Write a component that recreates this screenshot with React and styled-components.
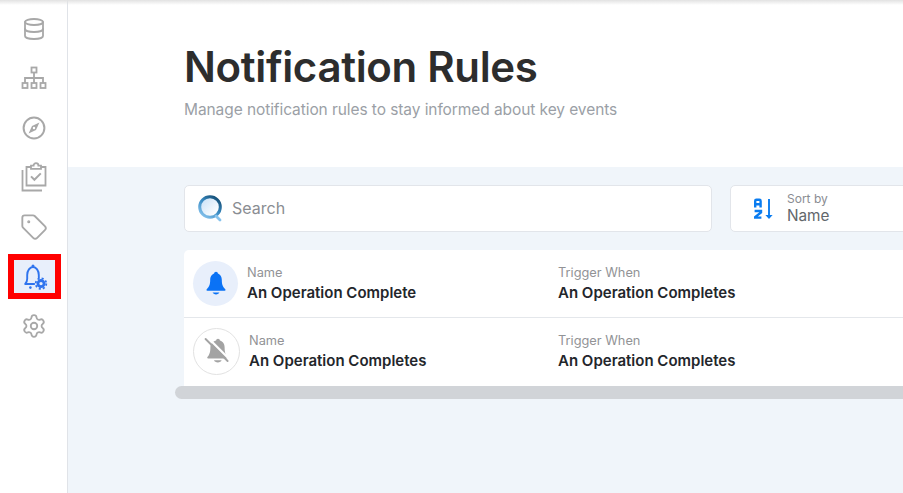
import React from "react";
import styled, { createGlobalStyle } from "styled-components";
import { Database, Tag, Settings } from "lucide-react";

const GlobalStyle = createGlobalStyle`
  html, body { margin: 0; padding: 0; height: 100%; overflow: hidden; background: #fff; }
  body { font-family: Inter, "Noto Sans", sans-serif; }
  #root { height: 100%; }
`;

const NetworkIcon = () => (
  <svg width="26" height="24" viewBox="0 0 26 24" fill="none" stroke="currentColor" strokeWidth="1.8">
    <rect x="10.5" y="1.5" width="5" height="5" />
    <rect x="1.5" y="17" width="5" height="5" />
    <rect x="10.5" y="17" width="5" height="5" />
    <rect x="19.5" y="17" width="5" height="5" />
    <path d="M13 6.5V17M4 17v-5h18v5" />
  </svg>
);

const CompassIcon = () => (
  <svg width="24" height="24" viewBox="0 0 24 24" fill="none">
    <circle cx="12" cy="12" r="10.4" stroke="currentColor" strokeWidth="2" />
    <path d="M17.4 6.6l-3.4 7.4-7.4 3.4 3.4-7.4z" fill="currentColor" />
    <circle cx="12" cy="12" r="1.2" fill="#fff" />
  </svg>
);

const ClipboardStackIcon = () => (
  <svg width="26" height="30" viewBox="0 0 26 30" fill="none" stroke="currentColor" strokeWidth="1.8">
    <path d="M1.5 8v20.5H21" />
    <path d="M10 5H5.5v18.5h19V5H20" />
    <path d="M10 6.8V3.6h2.6a2.4 2.4 0 0 1 4.8 0H20v3.2z" />
    <path d="M10 14.4l3.4 3.4 6.4-6.4" strokeWidth="2" />
  </svg>
);

const BellGearIcon = () => (
  <svg width="26" height="27" viewBox="0 0 26 27" fill="none">
    <path
      d="M12.2 21H3.2c1.2-1.2 2-2.6 2-5.2V12C5.2 7.6 7.8 4 11 4s5.8 3.6 5.8 8v2.6"
      stroke="#2f74ee"
      strokeWidth="1.9"
      strokeLinecap="round"
      strokeLinejoin="round"
    />
    <circle cx="11" cy="3" r="1.5" fill="#2f74ee" />
    <circle cx="8.4" cy="24.6" r="1.3" fill="#2f74ee" />
    <circle cx="19" cy="20.6" r="3.1" stroke="#2f74ee" strokeWidth="2.8" />
    <circle cx="19" cy="20.6" r="5.3" stroke="#2f74ee" strokeWidth="1.8" strokeDasharray="2.08 2.08" />
  </svg>
);

const SearchMark = () => (
  <svg width="26" height="27" viewBox="0 0 26 27" fill="none">
    <defs>
      <linearGradient id="ring" x1="20" y1="2" x2="5" y2="22" gradientUnits="userSpaceOnUse">
        <stop offset="0" stopColor="#124a70" />
        <stop offset="0.5" stopColor="#3a8cc4" />
        <stop offset="1" stopColor="#86c2ec" />
      </linearGradient>
      <linearGradient id="fill" x1="5" y1="5" x2="19" y2="19" gradientUnits="userSpaceOnUse">
        <stop offset="0" stopColor="#cfe4f8" />
        <stop offset="1" stopColor="#ffffff" />
      </linearGradient>
    </defs>
    <circle cx="12" cy="12" r="10.3" fill="url(#fill)" stroke="url(#ring)" strokeWidth="3" />
    <path d="M18 21l4 4" stroke="#86c2ec" strokeWidth="2.8" strokeLinecap="round" />
  </svg>
);

const SortIcon = () => (
  <svg width="22" height="22" viewBox="0 0 22 22" fill="none">
    <path d="M2.2 9.5V3c0-.8.5-1.2 1.2-1.2h3c.7 0 1.2.4 1.2 1.2v6.5M2.2 6.2h5.4" stroke="#0a7cf0" strokeWidth="2.4" />
    <path d="M1.6 13h6.4v1.4l-5.8 4.6v.6h6.2" stroke="#0a7cf0" strokeWidth="2.4" />
    <path d="M16 1v18" stroke="#0a7cf0" strokeWidth="1.9" />
    <path d="M12.4 17h7.2L16 21z" fill="#0a7cf0" />
  </svg>
);

const BellSolid = () => (
  <svg width="22" height="25" viewBox="0 0 22 25" fill="#0a72f5">
    <circle cx="11" cy="2.6" r="1.9" />
    <path d="M11 2.2c-3.8 0-5.8 3-5.8 6.6 0 4.8-1 7-3.2 9.2-.3.4-.6.6-.6 1 0 .5.4.7 1 .7h17.2c.6 0 1-.2 1-.7 0-.4-.3-.6-.6-1-2.2-2.2-3.2-4.4-3.2-9.2 0-3.6-2-6.6-5.8-6.6z" />
    <path d="M7.6 21.6h6.8c-.5 1.2-1.8 1.8-3.4 1.8s-2.9-.6-3.4-1.8z" />
  </svg>
);

const BellMuted = () => (
  <svg width="26" height="28" viewBox="0 0 26 28">
    <circle cx="14" cy="3.6" r="1.9" fill="#a3a3a3" />
    <path
      d="M14 3.2c4 0 6.6 3 6.6 7 0 5 .8 7.4 2.4 9.4.4.5.6.8.6 1.2 0 .5-.4.7-1 .7H4.2c-.6 0-1-.2-1-.7 0-.4.2-.7.6-1.2 1.6-2 2.6-4.4 2.6-9.4 0-4 3.6-7 7.6-7z"
      fill="#a3a3a3"
    />
    <path d="M10 23.2h7.6c-.4 1.4-2 2.2-3.8 2.2s-3.4-.8-3.8-2.2z" fill="#a3a3a3" />
    <path d="M3.4 0.2l22 22" stroke="#fff" strokeWidth="2.2" />
    <path d="M1.6 2l22 22" stroke="#a3a3a3" strokeWidth="1.9" strokeLinecap="round" />
  </svg>
);

const App = () => (
  <Page>
    <GlobalStyle />
    <Sidebar>
      <NavItem><Database size={24} strokeWidth={1.8} /></NavItem>
      <NavItem><NetworkIcon /></NavItem>
      <NavItem><CompassIcon /></NavItem>
      <NavItem><ClipboardStackIcon /></NavItem>
      <NavItem><Tag size={28} strokeWidth={1.6} /></NavItem>
      <ActiveItem><BellGearIcon /></ActiveItem>
      <NavItem><Settings size={26} strokeWidth={1.7} /></NavItem>
    </Sidebar>
    <Main>
      <Header>
        <Title>Notification Rules</Title>
        <Subtitle>Manage notification rules to stay informed about key events</Subtitle>
      </Header>
      <Content>
        <Toolbar>
          <SearchBox>
            <SearchMark />
            <SearchText>Search</SearchText>
          </SearchBox>
          <SortBox>
            <SortIcon />
            <SortLabels>
              <SortCaption>Sort by</SortCaption>
              <SortValue>Name</SortValue>
            </SortLabels>
          </SortBox>
        </Toolbar>
        <Table>
          <Row>
            <Avatar $active><BellSolid /></Avatar>
            <NameCell>
              <Label>Name</Label>
              <Value>An Operation Complete</Value>
            </NameCell>
            <Cell>
              <Label>Trigger When</Label>
              <Value>An Operation Completes</Value>
            </Cell>
          </Row>
          <Row>
            <Avatar><BellMuted /></Avatar>
            <NameCell $shift>
              <Label>Name</Label>
              <Value>An Operation Completes</Value>
            </NameCell>
            <Cell>
              <Label>Trigger When</Label>
              <Value>An Operation Completes</Value>
            </Cell>
          </Row>
        </Table>
        <ScrollThumb />
      </Content>
    </Main>
    <TopShade />
  </Page>
);

const Page = styled.div`
  display: flex;
  height: 493px;
  width: 903px;
  overflow: hidden;
  position: relative;
`;

const TopShade = styled.div`
  position: absolute;
  top: 0;
  left: 0;
  right: 0;
  height: 5px;
  background: linear-gradient(#e2e2e2, rgba(255, 255, 255, 0));
`;

const Sidebar = styled.nav`
  width: 67px;
  flex-shrink: 0;
  border-right: 1px solid #e0e3e8;
  display: flex;
  flex-direction: column;
  align-items: center;
  padding-top: 4px;
  background: #fff;
`;

const NavItem = styled.div`
  height: 49.5px;
  width: 100%;
  display: flex;
  align-items: center;
  justify-content: center;
  color: #a8a8a8;
`;

const ActiveItem = styled.div`
  box-sizing: border-box;
  width: 53px;
  height: 45px;
  margin: 2px 0 2.5px 2px;
  border: 6px solid #ff0000;
  background: #e8effb;
  display: flex;
  align-items: center;
  justify-content: center;
`;

const Main = styled.main`
  flex: 1;
  min-width: 0;
  display: flex;
  flex-direction: column;
`;

const Header = styled.header`
  height: 167px;
  box-sizing: border-box;
  padding: 41px 0 0 116px;
  background: #fff;
`;

const Title = styled.h1`
  margin: 0;
  font-size: 42px;
  line-height: 52px;
  font-weight: 600;
  color: #2d2d2d;
  letter-spacing: -0.33px;
`;

const Subtitle = styled.p`
  margin: 7px 0 0;
  font-size: 15.5px;
  line-height: 20px;
  letter-spacing: -0.08px;
  color: #9b9fa6;
`;

const Content = styled.section`
  flex: 1;
  background: #f0f5fa;
  padding: 18px 0 0 116px;
`;

const Toolbar = styled.div`
  display: flex;
  gap: 18px;
  width: 900px;
`;

const SearchBox = styled.div`
  box-sizing: border-box;
  width: 528px;
  height: 47px;
  background: #fff;
  border: 1px solid #e2e5ea;
  border-radius: 5px;
  display: flex;
  align-items: center;
  gap: 8px;
  padding-left: 13px;
`;

const SearchText = styled.span`
  font-size: 16px;
  line-height: 18px;
  margin-bottom: 1px;
  color: #8a8d92;
`;

const SortBox = styled.div`
  box-sizing: border-box;
  width: 300px;
  height: 47px;
  background: #fff;
  border: 1px solid #e2e5ea;
  border-radius: 5px;
  display: flex;
  align-items: center;
  gap: 12px;
  padding-left: 22px;
`;

const SortLabels = styled.div`
  display: flex;
  flex-direction: column;
`;

const SortCaption = styled.span`
  font-size: 12px;
  line-height: 14px;
  color: #8a8d92;
`;

const SortValue = styled.span`
  font-size: 15.3px;
  line-height: 19px;
  color: #62666b;
`;

const Table = styled.div`
  margin-top: 18px;
  width: 900px;
  background: #fff;
  border-radius: 5px 0 0 0;
`;

const Row = styled.div`
  height: 67px;
  box-sizing: border-box;
  display: flex;
  align-items: center;
  padding-left: 9px;
  & + & {
    height: 69px;
    border-top: 1px solid #e4e7eb;
  }
`;

const Avatar = styled.div`
  box-sizing: border-box;
  width: ${(p) => (p.$active ? "45px" : "47px")};
  height: ${(p) => (p.$active ? "45px" : "47px")};
  margin-bottom: ${(p) => (p.$active ? "0" : "2px")};
  border-radius: 50%;
  flex-shrink: 0;
  display: flex;
  align-items: center;
  justify-content: center;
  background: ${(p) => (p.$active ? "#e8effb" : "#fff")};
  border: ${(p) => (p.$active ? "none" : "1px solid #e2e2e2")};
`;

const Cell = styled.div`
  display: flex;
  flex-direction: column;
  gap: 2px;
`;

const NameCell = styled(Cell)`
  width: ${(p) => (p.$shift ? "309px" : "311px")};
  margin-left: 9px;
`;

const Label = styled.span`
  font-size: 12.8px;
  line-height: 16px;
  color: #929396;
`;

const Value = styled.span`
  font-size: 15px;
  line-height: 20px;
  font-weight: 600;
  color: #23262b;
`;

const ScrollThumb = styled.div`
  width: 800px;
  height: 13px;
  margin-left: -9px;
  border-radius: 7px;
  background: #d1d4d8;
`;

export default App;
